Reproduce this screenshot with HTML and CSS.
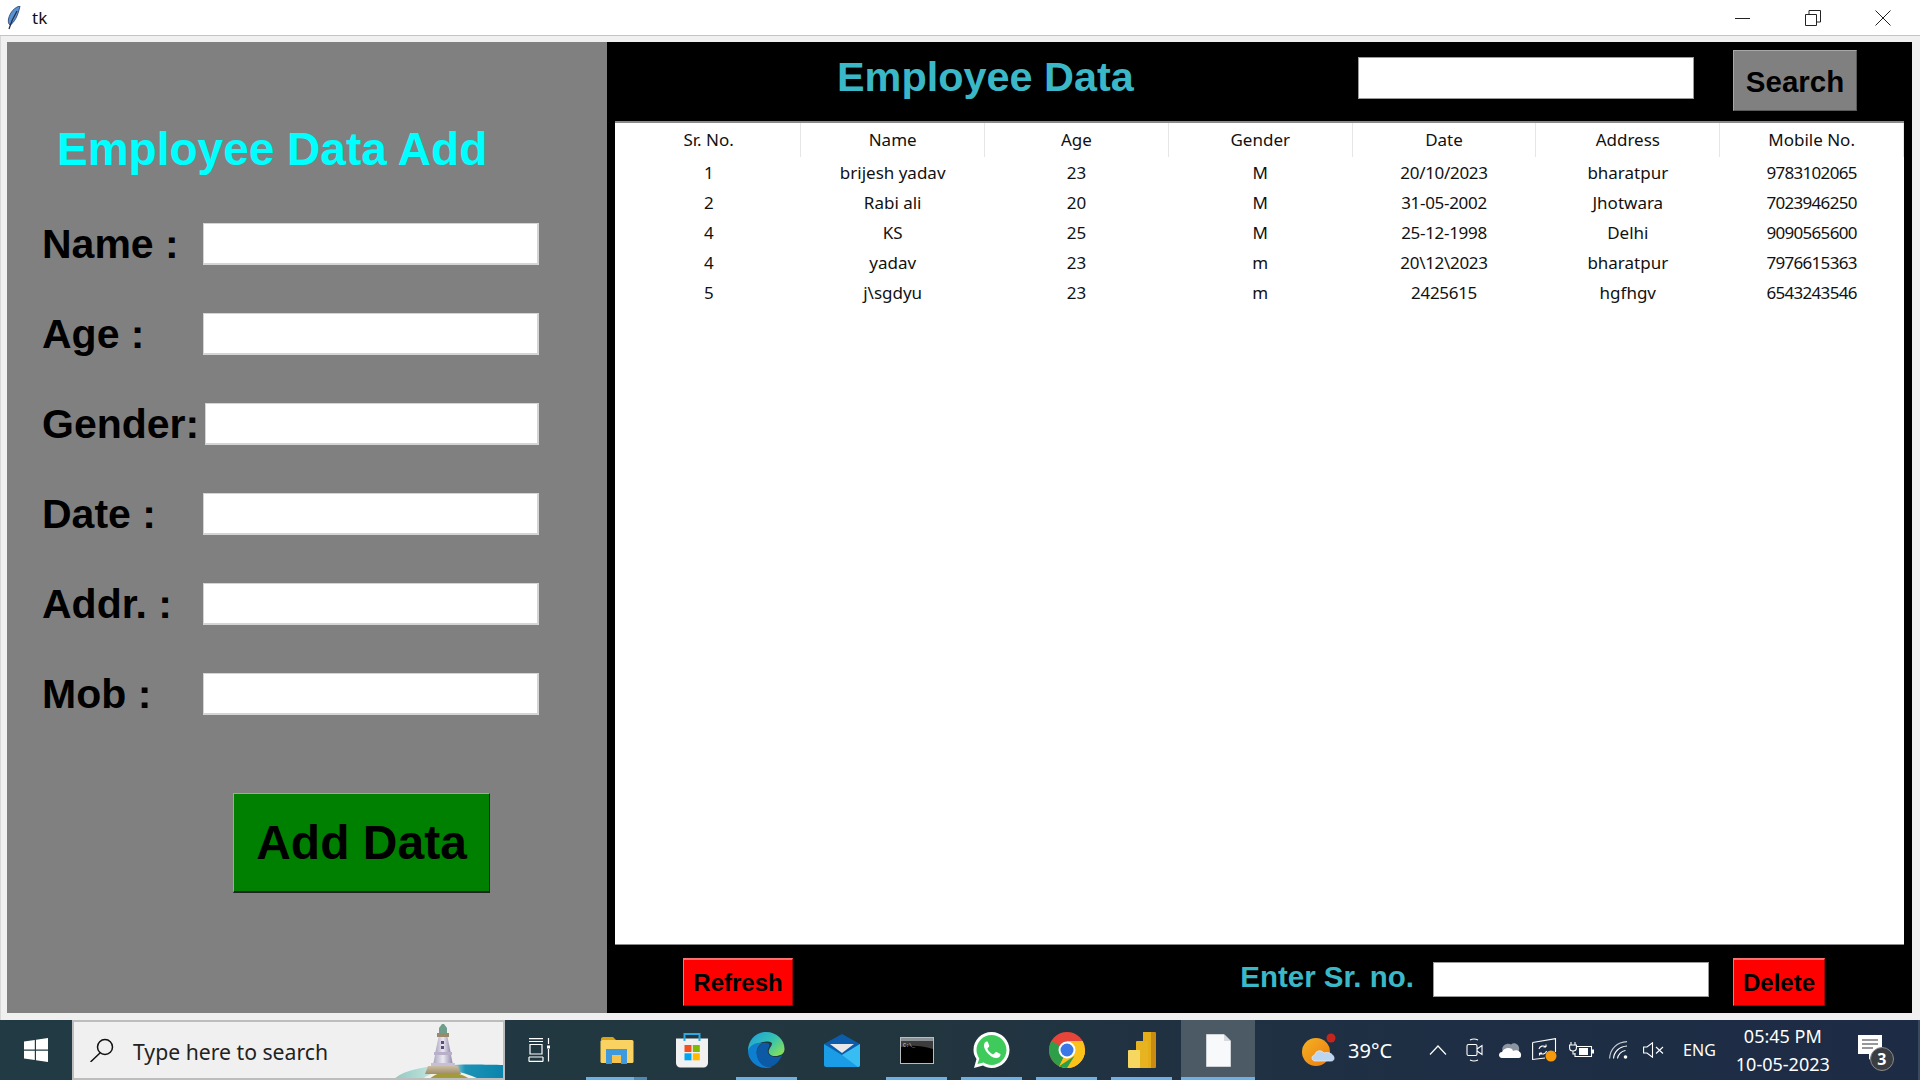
FILE: index.html
```html
<!DOCTYPE html>
<html>
<head>
    <title>tk</title>
    <link rel="stylesheet" href="styles.css">
</head>
<body>
    <header class="titlebar">
        <svg class="feather" width="14" height="24" viewBox="0 0 14 24">
            <path d="M13 0C8 1 3 6 1.500 13C1 16 1.500 18 3 19C7 17 11 10 13 0Z" fill="#5b92d2" stroke="#1d3a66" stroke-width="0.800"/>
            <path d="M10 5C7 10 4 16 2 23" fill="none" stroke="#20304a" stroke-width="1.300"/>
        </svg>
        <span class="title-text">tk</span>
        <div class="window-btns">
            <div class="window-btn">
                <svg width="16" height="16" viewBox="0 0 16 16"><path d="M0 8.500H15" stroke="#222" fill="none"/></svg>
            </div>
            <div class="window-btn">
                <svg width="16" height="16" viewBox="0 0 16 16"><path d="M0.500 4.500H11.500V15.500H0.500ZM4 4.500V0.500H15.500V12H11.500" stroke="#222" fill="none"/></svg>
            </div>
            <div class="window-btn">
                <svg width="16" height="16" viewBox="0 0 16 16"><path d="M0.500 0.500L15.500 15.500M15.500 0.500L0.500 15.500" stroke="#222" fill="none"/></svg>
            </div>
        </div>
    </header>

    <main class="window">
        <section class="add-panel">
            <h1 class="add-title">Employee Data Add</h1>
            <div class="form-rows">
                <div class="form-row"><label class="form-label">Name :</label><input class="entry" type="text"></div>
                <div class="form-row"><label class="form-label">Age :</label><input class="entry" type="text"></div>
                <div class="form-row"><label class="form-label">Gender:</label><input class="entry entry-gender" type="text"></div>
                <div class="form-row"><label class="form-label">Date :</label><input class="entry" type="text"></div>
                <div class="form-row"><label class="form-label">Addr. :</label><input class="entry" type="text"></div>
                <div class="form-row"><label class="form-label">Mob :</label><input class="entry" type="text"></div>
            </div>
            <button class="add-btn">Add Data</button>
        </section>

        <section class="data-panel">
            <div class="data-top">
                <h2 class="data-title">Employee Data</h2>
                <input class="search-entry" type="text">
                <button class="search-btn">Search</button>
            </div>
            <div class="table-wrap">
                <table class="data-table">
                    <thead>
                        <tr><th>Sr. No.</th><th>Name</th><th>Age</th><th>Gender</th><th>Date</th><th>Address</th><th>Mobile No.</th></tr>
                    </thead>
                    <tbody>
                        <tr><td>1</td><td>brijesh yadav</td><td>23</td><td>M</td><td class="date">20/10/2023</td><td>bharatpur</td><td class="mobile">9783102065</td></tr>
                        <tr><td>2</td><td>Rabi ali</td><td>20</td><td>M</td><td class="date">31-05-2002</td><td>Jhotwara</td><td class="mobile">7023946250</td></tr>
                        <tr><td>4</td><td>KS</td><td>25</td><td>M</td><td class="date">25-12-1998</td><td>Delhi</td><td class="mobile">9090565600</td></tr>
                        <tr><td>4</td><td>yadav</td><td>23</td><td>m</td><td class="date">20\12\2023</td><td>bharatpur</td><td class="mobile">7976615363</td></tr>
                        <tr><td>5</td><td>j\sgdyu</td><td>23</td><td>m</td><td class="date">2425615</td><td>hgfhgv</td><td class="mobile">6543243546</td></tr>
                    </tbody>
                </table>
            </div>
            <div class="data-bottom">
                <button class="red-btn refresh-btn">Refresh</button>
                <span class="srno-label">Enter Sr. no.</span>
                <input class="srno-entry" type="text">
                <button class="red-btn delete-btn">Delete</button>
            </div>
        </section>
    </main>

    <footer class="taskbar">
        <div class="start">
            <svg width="24" height="24" viewBox="0 0 24 24" fill="#fff">
                <path d="M0 3.500L10.800 2V11.500H0ZM12 1.800L24 0V11.500H12ZM0 12.700H10.800V22L0 20.500ZM12 12.700H24V24L12 22.200Z"/>
            </svg>
        </div>
        <div class="searchbox">
            <svg class="search-icon" width="24" height="24" viewBox="0 0 24 24" fill="none" stroke="#111" stroke-width="1.500">
                <circle cx="15" cy="9" r="7.500"/>
                <path d="M10 15L1 23.500" stroke-linecap="round"/>
            </svg>
            <span class="search-text">Type here to search</span>
            <svg class="lighthouse" width="111" height="56" viewBox="0 0 111 56">
                <defs>
                    <linearGradient id="tower" x1="0" x2="1" y1="0" y2="0">
                        <stop offset="0" stop-color="#a9a3bd"/><stop offset="0.500" stop-color="#ece8f2"/><stop offset="1" stop-color="#8f89a8"/>
                    </linearGradient>
                    <linearGradient id="rock" x1="0" x2="0" y1="0" y2="1">
                        <stop offset="0" stop-color="#cbbda3"/><stop offset="1" stop-color="#a08c68"/>
                    </linearGradient>
                    <linearGradient id="sea" x1="0" x2="1" y1="0" y2="0">
                        <stop offset="0" stop-color="#8fc9c2"/><stop offset="0.500" stop-color="#d9eee8"/><stop offset="0.650" stop-color="#1d93b5"/><stop offset="1" stop-color="#0a84ad"/>
                    </linearGradient>
                </defs>
                <path d="M0 56C10 46 30 42 60 41C80 40 100 41 111 41V56Z" fill="url(#sea)"/>
                <path d="M28 56C36 50 44 47 50 46C62 46 76 50 88 56Z" fill="#f4f2e4"/>
                <path d="M35 56C42 50 48 48 52 48C62 48 72 51 78 56Z" fill="#a39a3a"/>
                <path d="M49 0H51L54 4V9H46V4Z" fill="#6f9e8c"/>
                <rect x="44" y="9" width="12" height="4" fill="#9a8a6a"/>
                <path d="M45.500 13H54.500L58 30H42Z" fill="url(#tower)"/>
                <rect x="41" y="28" width="18" height="3" fill="#b7b0c8"/>
                <rect x="48" y="17" width="3" height="3" fill="#565078"/>
                <rect x="48" y="22" width="3" height="3" fill="#565078"/>
                <path d="M42 31H58L60 41H40Z" fill="url(#tower)"/>
                <rect x="38" y="39" width="24" height="3" fill="#c7c0d4"/>
                <path d="M35 42H65L68 50H32Z" fill="url(#rock)"/>
            </svg>
        </div>
        <div class="task-icons">
            <div class="task-slot task-view">
                <svg width="24" height="24" viewBox="0 0 24 24" fill="none" stroke="#fff" stroke-width="1.200">
                    <path d="M2 0.600H16M2 3.500H16M3 6.500H15V16H3ZM2 19H16M2 23.400H16M2 19V23.400M16 19V23.400"/>
                    <path d="M21.500 0V6M21.500 11V23.500"/>
                    <rect x="20" y="7.500" width="3" height="3" fill="#fff" stroke="none"/>
                </svg>
            </div>
            <div class="task-slot task-open task-split">
                <svg width="34" height="27" viewBox="0 0 34 27">
                    <path d="M1 2C1 1 2 0 3 0H13L16 3H1Z" fill="#d9a20f"/>
                    <rect x="0.500" y="3" width="33" height="23" rx="1.500" fill="#fad261"/>
                    <path d="M6 12H27V27H21V18H12V27H6Z" fill="#3f99dd"/>
                    <rect x="12" y="18" width="9" height="8" fill="#f6c44c"/>
                </svg>
            </div>
            <div class="task-slot">
                <svg width="36" height="36" viewBox="0 0 36 36">
                    <path d="M2 6.500H34V31C34 33.500 32 35.500 29.500 35.500H6.500C4 35.500 2 33.500 2 31Z" fill="#f1f1f1"/>
                    <path d="M10.500 9V2H25.500V9" fill="none" stroke="#2fa8e0" stroke-width="2"/>
                    <rect x="10.500" y="13" width="7" height="7" fill="#f25022"/>
                    <rect x="18.800" y="13" width="7" height="7" fill="#7fba00"/>
                    <rect x="10.500" y="21.300" width="7" height="7" fill="#00a4ef"/>
                    <rect x="18.800" y="21.300" width="7" height="7" fill="#ffb900"/>
                </svg>
            </div>
            <div class="task-slot task-open">
                <svg width="37" height="36" viewBox="0 0 37 36">
                    <defs>
                        <linearGradient id="edge-a" x1="0" x2="1" y1="0" y2="0.700">
                            <stop offset="0" stop-color="#1b9de2"/><stop offset="0.600" stop-color="#35c2b0"/><stop offset="1" stop-color="#7fdc62"/>
                        </linearGradient>
                    </defs>
                    <path d="M18 0C29 0 36.500 8 36.500 17C36.500 22 32 24 27 24C22 24 20 21 21 18C22 15 24 14 24 11C21 9 15 9 10 12C5 15 2 18 0 19C0 8 8 0 18 0Z" fill="url(#edge-a)"/>
                    <path d="M0 19C2 13 8 10 14 11C9 14 7 20 10 26C12 31 18 35 24 35C21 36 19 36 18 36C8 36 0 28 0 19Z" fill="#0e7fd0"/>
                    <path d="M14 11C19 10 23 11 21 15C19 18 19 22 23 24C27 26 32 25 34 23C32 29 27 34 21 35.500C15 35 11 31 9.500 26C7.500 20 10 14 14 11Z" fill="#0c5aa6"/>
                </svg>
            </div>
            <div class="task-slot">
                <svg width="36" height="33" viewBox="0 0 36 33">
                    <path d="M0 10L18 0L36 10L18 22Z" fill="#0b5cab"/>
                    <path d="M6 10H30L18 19Z" fill="#e8e8e8"/>
                    <path d="M0 10L18 21L36 10V31C36 32 35 33 34 33H2C1 33 0 32 0 31Z" fill="#1b9ce6"/>
                    <path d="M18 21L36 10V31C36 32 35 33 34 33Z" fill="#37bdf2"/>
                </svg>
            </div>
            <div class="task-slot task-open">
                <svg width="34" height="27" viewBox="0 0 34 27">
                    <rect x="0.500" y="0.500" width="33" height="26" fill="#000" stroke="#b9bcc0"/>
                    <rect x="1" y="1" width="32" height="3" fill="#8c9196"/>
                    <path d="M1 4H33V12C20 8 10 8 1 10Z" fill="#3c3c3c"/>
                    <text class="cmd-prompt" x="3" y="10">C:\_</text>
                </svg>
            </div>
            <div class="task-slot task-open">
                <svg width="37" height="36" viewBox="0 0 37 36">
                    <path d="M1 36L3.500 27C1.500 24 0.500 21.500 0.500 18C0.500 8 8.500 0 18.500 0C28.500 0 36.500 8 36.500 18C36.500 28 28.500 36 18.500 36C15 36 12.500 35 10 33.500Z" fill="#fff"/>
                    <path d="M4.500 32L6.300 26.500C4.500 23.800 3.500 21 3.500 18C3.500 9.800 10.200 3 18.500 3C26.800 3 33.500 9.800 33.500 18C33.500 26.300 26.800 33 18.500 33C15.500 33 13 32.200 10.500 30.600Z" fill="#3fcb5c"/>
                    <path d="M13.500 9.500C12 10 10.800 11.800 11 14C11.500 19 17 25 22.500 26C25 26.400 27 25 27.500 23C27.600 22.400 27.500 22 27 21.700L23.500 20C23 19.800 22.500 20 22.200 20.400L20.800 22C20.400 22.400 20 22.400 19.500 22.200C17.500 21.300 15.500 19.300 14.600 17.300C14.400 16.800 14.500 16.400 14.800 16L16 14.800C16.300 14.400 16.300 14 16.200 13.500L14.800 10C14.500 9.500 14 9.400 13.500 9.500Z" fill="#fff"/>
                </svg>
            </div>
            <div class="task-slot task-open">
                <svg width="36" height="36" viewBox="0 0 36 36">
                    <circle cx="18" cy="18" r="18" fill="#e8453a"/>
                    <path d="M18 18L2.400 9A18 18 0 0 0 10 34.200Z" fill="#2f9e48"/>
                    <path d="M18 18L10 34.200A18 18 0 0 0 18 36A18 18 0 0 0 36 18A18 18 0 0 0 33.600 9H18Z" fill="#fbc21a"/>
                    <path d="M18 18H33V9L36 18A18 18 0 0 1 18 36L10 34.200Z" fill="#fbc21a"/>
                    <path d="M18 18L10 34.200L2.400 9Z" fill="#2f9e48"/>
                    <path d="M10 34.200A18 18 0 0 0 18 36L25.500 24Z" fill="#2f9e48"/>
                    <circle cx="18" cy="18" r="8.500" fill="#fff"/>
                    <circle cx="18" cy="18" r="6.500" fill="#3b78e7"/>
                </svg>
            </div>
            <div class="task-slot task-open">
                <svg width="28" height="36" viewBox="0 0 28 36">
                    <rect x="15" y="0" width="13" height="36" rx="1" fill="#c98b10"/>
                    <rect x="15" y="0" width="8" height="36" fill="#e5ad17"/>
                    <rect x="8" y="9" width="12" height="27" rx="1" fill="#e8b320"/>
                    <rect x="0" y="18" width="12" height="18" rx="1" fill="#f6d860"/>
                </svg>
            </div>
            <div class="task-slot task-open task-active">
                <svg width="25" height="33" viewBox="0 0 25 33">
                    <path d="M0.500 0.500H18L24.500 7V32.500H0.500Z" fill="#f8f9fb" stroke="#cfd4d9"/>
                    <path d="M18 0.500V7H24.500Z" fill="#d6dade"/>
                </svg>
            </div>
        </div>
        <div class="tray">
            <div class="weather">
                <svg width="34" height="34" viewBox="0 0 34 34">
                    <defs>
                        <linearGradient id="sun" x1="0" x2="1" y1="0" y2="1">
                            <stop offset="0" stop-color="#f4b322"/><stop offset="1" stop-color="#ee7a10"/>
                        </linearGradient>
                    </defs>
                    <circle cx="14" cy="19" r="14" fill="url(#sun)"/>
                    <circle cx="29" cy="5" r="4.500" fill="#c4261d"/>
                    <path d="M13 28C9 28 9 22 13 22C13 18 19 16 22 20C27 18 32 22 32 25C32 27 31 28 29 28Z" fill="#bcd6f2" stroke="#dfeaf7" stroke-width="0.800"/>
                </svg>
                <span class="temp">39°C</span>
            </div>
            <div class="tray-icons">
                <svg class="ti-chevron" width="18" height="10" viewBox="0 0 18 10"><path d="M1 9.500L9 1L17 9.500" fill="none" stroke="#fff" stroke-width="1.200"/></svg>
                <svg class="ti-meet" width="17" height="24" viewBox="0 0 17 24" fill="none" stroke="#fff" stroke-width="1.100">
                    <path d="M4 2C6.500 0.800 9.500 0.800 12 2M4 22C6.500 23.200 9.500 23.200 12 22"/>
                    <rect x="1" y="6.500" width="10" height="11" rx="1.500"/>
                    <path d="M11 11L16 7.500V16.500L11 13"/>
                </svg>
                <svg class="ti-cloud" width="24" height="16" viewBox="0 0 24 16">
                    <path d="M5 10C2 4 9 0 13 2.500C17 -1 24 4 20 11Z" fill="#8c96a3"/>
                    <path d="M4 16C0 16 0 10 4 10C7 4 15 6 15 9C19 7 24 10 23 14C23 15 22 16 21 16Z" fill="#fff"/>
                </svg>
                <svg class="ti-sync" width="25" height="24" viewBox="0 0 25 24">
                    <path d="M0.600 4.500L23.500 0.600V14M0.600 4.500V21.500L13 20" fill="none" stroke="#fff" stroke-width="1.100"/>
                    <path d="M7 11C7.500 8 11.500 7 14 9M14 9V6.500M14 9H11.500M14.500 13C14 16 10 17 7.500 15M7.500 15V17.500M7.500 15H10" fill="none" stroke="#fff" stroke-width="1.100"/>
                    <circle cx="19" cy="18" r="5.500" fill="#f69a0c"/>
                </svg>
                <svg class="ti-battery" width="25" height="18" viewBox="0 0 25 18" fill="none" stroke="#fff" stroke-width="1.100">
                    <path d="M2 1V4M6 1V4M0.600 4H7.400V7C7.400 9 6 10 4 10C2 10 0.600 9 0.600 7Z"/>
                    <path d="M4 10V13H6M8 5.500H22.500V15.500H6V12"/>
                    <rect x="10" y="7" width="9" height="7" fill="#fff" stroke="none"/>
                    <rect x="23" y="8.500" width="2" height="4" fill="#fff" stroke="none"/>
                </svg>
                <svg class="ti-wifi" width="19" height="18" viewBox="0 0 19 18" fill="none" stroke="#fff" stroke-width="1.100">
                    <path d="M0.600 17.500C1 8 8 1 18 0.600" stroke="#c9ced6"/>
                    <path d="M4.500 17.500C5 11 10 5.500 18 5"/>
                    <path d="M8.500 17.500C9 14 12 10 16.500 9.500"/>
                    <circle cx="16.500" cy="16" r="1.800" fill="#fff" stroke="none"/>
                </svg>
                <svg class="ti-speaker" width="21" height="16" viewBox="0 0 21 16" fill="none" stroke="#fff" stroke-width="1.100">
                    <path d="M0.600 5H4L9.500 0.800V15.200L4 11H0.600Z"/>
                    <path d="M13 5L20 11.500M20 5L13 11.500"/>
                </svg>
            </div>
            <span class="lang">ENG</span>
            <div class="clock">
                <span>05:45 PM</span>
                <span>10-05-2023</span>
            </div>
            <div class="notify">
                <svg width="24" height="26" viewBox="0 0 24 26">
                    <path d="M0 0H24V19H15L11 25V19H0Z" fill="#fff"/>
                    <path d="M4 5H20M4 9H20M4 13H15" stroke="#333" stroke-width="1.200"/>
                </svg>
                <span class="badge">3</span>
            </div>
        </div>
    </footer>
</body>
</html>
```

FILE: styles.css
```css
* {
    box-sizing: border-box;
}

html, body {
    margin: 0;
    height: 1080px;
    overflow: hidden;
}

body {
    display: flex;
    flex-direction: column;
    background-color: #f0f0f0;
    font-family: "Liberation Sans", Arial, sans-serif;
}

/* title bar */
.titlebar {
    height: 36px;
    background-color: #fff;
    border-bottom: 1px solid #c4c4c4;
    display: flex;
    align-items: center;
    padding-left: 7px;
}

.title-text {
    margin-left: 11px;
    font-family: "Noto Sans", sans-serif;
    font-size: 17px;
    color: #111;
}

.window-btns {
    margin-left: auto;
    margin-right: 2px;
    display: flex;
}

.window-btn {
    width: 70px;
    height: 35px;
    display: flex;
    align-items: center;
    justify-content: center;
}

/* tk window */
.window {
    height: 984px;
    padding: 6px 8px 7px 6px;
    border-left: 1px solid #d8d8d8;
    display: flex;
}

.add-panel {
    width: 600px;
    height: 971px;
    background-color: #808080;
    padding-top: 81px;
}

.add-title {
    margin: 0 0 48px 50px;
    font-size: 46px;
    line-height: 52px;
    font-weight: bold;
    color: #00ffff;
    white-space: nowrap;
}

.form-rows {
    display: flex;
    flex-direction: column;
    gap: 48px;
    padding-left: 35px;
}

.form-row {
    display: flex;
    align-items: center;
    height: 42px;
}

.form-label {
    width: 161px;
    font-size: 41px;
    font-weight: bold;
    color: #000;
    white-space: nowrap;
}

.entry {
    width: 336px;
    height: 42px;
    background-color: #fff;
    border: 2px solid #d4d4d4;
    border-width: 1px 2px 2px 1px;
    padding: 0;
}

.entry-gender {
    width: 334px;
    margin-left: 2px;
}

.add-btn {
    display: block;
    width: 257px;
    height: 100px;
    margin: 78px 0 0 226px;
    padding: 0;
    background-color: #008000;
    border: 1px solid;
    border-color: #7fbf7f #222 #222 #7fbf7f;
    border-bottom-width: 2px;
    font-family: inherit;
    font-size: 48px;
    font-weight: bold;
    color: #000;
}

.data-panel {
    width: 1305px;
    height: 971px;
    background-color: #000;
    display: flex;
    flex-direction: column;
}

.data-top {
    height: 79px;
    display: flex;
    align-items: flex-start;
}

.data-title {
    margin: 12px 0 0 230px;
    font-size: 41.400px;
    line-height: 46px;
    font-weight: bold;
    color: #3ab8c8;
    white-space: nowrap;
}

.search-entry {
    width: 336px;
    height: 42px;
    margin: 15px 0 0 auto;
    padding: 0;
    background-color: #fff;
    border: 1px solid #9a9a9a;
}

.search-btn {
    width: 124px;
    height: 61px;
    margin: 8px 55px 0 39px;
    padding: 2px 0 0;
    background-color: #808080;
    border: 1px solid;
    border-color: #a8a8a8 #5a5a5a #5a5a5a #a8a8a8;
    font-family: inherit;
    font-size: 29.500px;
    font-weight: bold;
    color: #000;
}

.table-wrap {
    height: 824px;
    margin: 0 8px;
    padding-left: 2px;
    background-color: #fff;
    border-top: 2px solid #8a8a8a;
    border-bottom: 1px solid #8a8a8a;
}

.data-table {
    width: 100%;
    table-layout: fixed;
    border-collapse: collapse;
    font-family: "Noto Sans", sans-serif;
    font-size: 17px;
    color: #111;
}

.data-table th {
    height: 34px;
    padding: 0 0 2px;
    font-weight: normal;
    border-right: 1px solid #e6e6e6;
}

.data-table td {
    height: 30px;
    padding: 0;
    text-align: center;
}

.data-table .date {
    letter-spacing: -0.300px;
}

.data-table .mobile {
    letter-spacing: -0.700px;
}

.data-bottom {
    flex: 1;
    display: flex;
    align-items: flex-start;
}

.red-btn {
    height: 48px;
    margin-top: 13px;
    padding: 0;
    background-color: #ff0000;
    border: 1px solid;
    border-color: #ff7070 #a00000 #a00000 #ff7070;
    border-top-width: 2px;
    font-family: inherit;
    font-size: 24px;
    font-weight: bold;
    color: #000;
}

.refresh-btn {
    width: 110px;
    margin-left: 76px;
}

.srno-label {
    margin: 16px 19px 0 auto;
    font-size: 29.500px;
    line-height: 32px;
    font-weight: bold;
    color: #3ab8c8;
}

.srno-entry {
    width: 276px;
    height: 35px;
    margin-top: 17px;
    padding: 0;
    background-color: #fff;
    border: 1px solid #9a9a9a;
}

.delete-btn {
    width: 92px;
    margin: 13px 87px 0 24px;
}

/* taskbar */
.taskbar {
    height: 60px;
    background: linear-gradient(90deg, #213a44 0%, #22363f 45%, #1e2e44 75%, #1d2c44 100%);
    display: flex;
    color: #fff;
    font-family: "Noto Sans", sans-serif;
}

.start {
    width: 72px;
    display: flex;
    align-items: center;
    justify-content: center;
}

.searchbox {
    width: 433px;
    position: relative;
    overflow: hidden;
    background-color: #f0f0f0;
    border: 2px solid #bdbdbd;
    display: flex;
    align-items: center;
    padding-left: 16px;
    color: #222;
}

.search-text {
    margin: 2px 0 0 19px;
    font-size: 21.200px;
}

.lighthouse {
    position: absolute;
    left: 319px;
    top: 2px;
}

.task-icons {
    width: 750px;
    display: flex;
}

.task-slot {
    width: 75px;
    height: 60px;
    position: relative;
    display: flex;
    align-items: center;
    justify-content: center;
}

.task-view {
    width: 74px;
    padding-right: 6px;
}

.task-open::after {
    content: "";
    position: absolute;
    left: 7px;
    right: 7px;
    bottom: 0;
    height: 3px;
    background-color: #6cb0e6;
}

.task-split::before {
    content: "";
    position: absolute;
    right: 7px;
    bottom: 0;
    width: 13px;
    height: 3px;
    background-color: #4f88b3;
    z-index: 1;
}

.task-active {
    width: 74px;
    margin-left: 2px;
    background-color: #4c5a66;
}

.task-active::after {
    left: 0;
    right: 0;
}

.cmd-prompt {
    font-family: "Liberation Mono", monospace;
    font-size: 5px;
    fill: #ddd;
}

.tray {
    flex: 1;
    display: flex;
    align-items: center;
    border-right: 2px solid #3a4a5e;
}

.weather {
    display: flex;
    align-items: center;
    margin-left: 47px;
}

.temp {
    margin-left: 12px;
    font-size: 20px;
}

.tray-icons {
    display: flex;
    align-items: center;
    margin-left: 37px;
}

.ti-meet {
    margin-left: 19px;
}

.ti-cloud {
    margin-left: 15px;
}

.ti-sync {
    margin-left: 10px;
}

.ti-battery {
    margin-left: 12px;
}

.ti-wifi {
    margin-left: 15px;
}

.ti-speaker {
    margin-left: 15px;
}

.lang {
    margin-left: 19px;
    font-size: 16px;
}

.clock {
    margin-left: 20px;
    width: 94px;
    display: flex;
    flex-direction: column;
    align-items: center;
    gap: 4px;
    font-size: 18px;
    line-height: 24px;
    white-space: nowrap;
}

.notify {
    position: relative;
    margin-left: 28px;
    width: 24px;
    height: 26px;
    top: -2px;
}

.badge {
    position: absolute;
    left: 12px;
    top: 12px;
    width: 24px;
    height: 24px;
    border-radius: 50%;
    background-color: #3a3d42;
    border: 1px solid #8a8a8a;
    display: flex;
    align-items: center;
    justify-content: center;
    font-size: 16px;
    font-weight: bold;
}
```
